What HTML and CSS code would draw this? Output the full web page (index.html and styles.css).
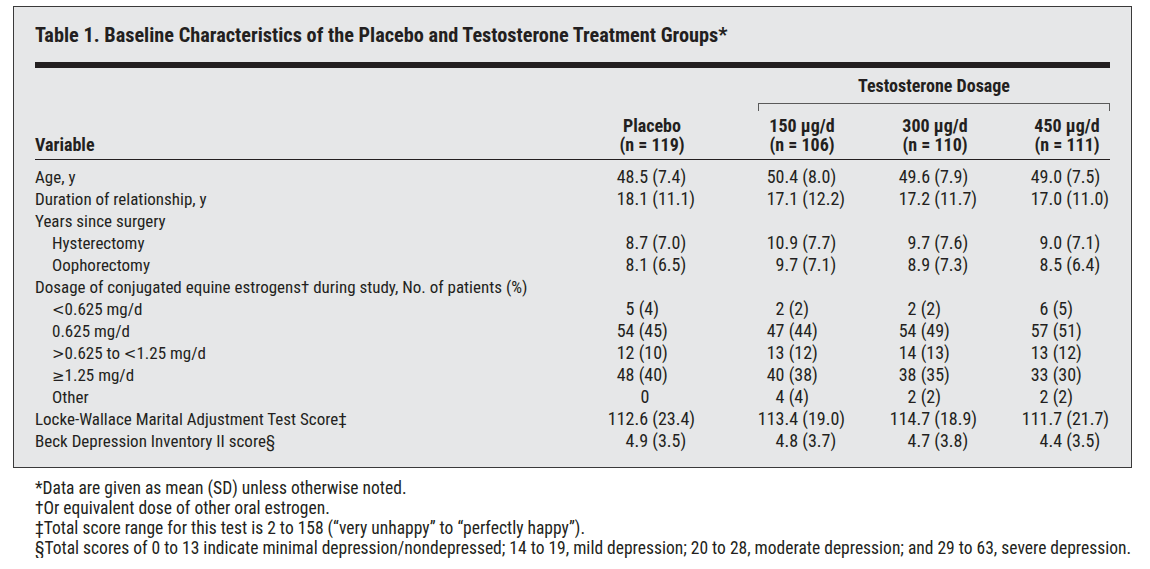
FILE: index.html
```html
<!DOCTYPE html>
<html>
<head>
<meta charset="utf-8">
<link rel="stylesheet" href="styles.css">
</head>
<body>
<div class="box">
  <h1 class="title">Table 1. Baseline Characteristics of the Placebo and Testosterone Treatment Groups*</h1>
  <div class="thick-rule"></div>
  <table class="data">
    <colgroup>
      <col class="w0"><col class="w1"><col class="w2"><col class="w3"><col class="w4">
    </colgroup>
    <thead>
      <tr class="hrow1">
        <th></th>
        <th></th>
        <th colspan="3" class="span-head">
          <div class="group-label">Testosterone Dosage</div>
          <div class="bracket"></div>
        </th>
      </tr>
      <tr class="hrow2">
        <th class="var-head">Variable</th>
        <th class="h1">Placebo<br>(n = 119)</th>
        <th class="h2">150 µg/d<br>(n = 106)</th>
        <th class="h3">300 µg/d<br>(n = 110)</th>
        <th class="h4">450 µg/d<br>(n = 111)</th>
      </tr>
    </thead>
    <tbody>
      <tr class="first">
        <td>Age, y</td>
        <td class="d1"><span class="i">48</span>.5 (7.4)</td>
        <td class="d2"><span class="i">50</span>.4 (8.0)</td>
        <td class="d3"><span class="i">49</span>.6 (7.9)</td>
        <td class="d4"><span class="i">49</span>.0 (7.5)</td>
      </tr>
      <tr>
        <td>Duration of relationship, y</td>
        <td class="d1"><span class="i">18</span>.1 (11.1)</td>
        <td class="d2"><span class="i">17</span>.1 (12.2)</td>
        <td class="d3"><span class="i">17</span>.2 (11.7)</td>
        <td class="d4"><span class="i">17</span>.0 (11.0)</td>
      </tr>
      <tr>
        <td>Years since surgery</td>
        <td></td><td></td><td></td><td></td>
      </tr>
      <tr>
        <td class="sub">Hysterectomy</td>
        <td class="d1"><span class="i">8</span>.7 (7.0)</td>
        <td class="d2"><span class="i">10</span>.9 (7.7)</td>
        <td class="d3"><span class="i">9</span>.7 (7.6)</td>
        <td class="d4"><span class="i">9</span>.0 (7.1)</td>
      </tr>
      <tr>
        <td class="sub">Oophorectomy</td>
        <td class="d1"><span class="i">8</span>.1 (6.5)</td>
        <td class="d2"><span class="i">9</span>.7 (7.1)</td>
        <td class="d3"><span class="i">8</span>.9 (7.3)</td>
        <td class="d4"><span class="i">8</span>.5 (6.4)</td>
      </tr>
      <tr>
        <td colspan="5">Dosage of conjugated equine estrogens† during study, No. of patients (%)</td>
      </tr>
      <tr>
        <td class="sub"><span class="op">&lt;</span>0.625 mg/d</td>
        <td class="d1"><span class="i">5</span> (4)</td>
        <td class="d2"><span class="i">2</span> (2)</td>
        <td class="d3"><span class="i">2</span> (2)</td>
        <td class="d4"><span class="i">6</span> (5)</td>
      </tr>
      <tr>
        <td class="sub">0.625 mg/d</td>
        <td class="d1"><span class="i">54</span> (45)</td>
        <td class="d2"><span class="i">47</span> (44)</td>
        <td class="d3"><span class="i">54</span> (49)</td>
        <td class="d4"><span class="i">57</span> (51)</td>
      </tr>
      <tr>
        <td class="sub"><span class="op">&gt;</span>0.625 to <span class="op">&lt;</span>1.25 mg/d</td>
        <td class="d1"><span class="i">12</span> (10)</td>
        <td class="d2"><span class="i">13</span> (12)</td>
        <td class="d3"><span class="i">14</span> (13)</td>
        <td class="d4"><span class="i">13</span> (12)</td>
      </tr>
      <tr>
        <td class="sub"><span class="op">≥</span>1.25 mg/d</td>
        <td class="d1"><span class="i">48</span> (40)</td>
        <td class="d2"><span class="i">40</span> (38)</td>
        <td class="d3"><span class="i">38</span> (35)</td>
        <td class="d4"><span class="i">33</span> (30)</td>
      </tr>
      <tr>
        <td class="sub">Other</td>
        <td class="d1"><span class="i zero">0</span></td>
        <td class="d2"><span class="i">4</span> (4)</td>
        <td class="d3"><span class="i">2</span> (2)</td>
        <td class="d4"><span class="i">2</span> (2)</td>
      </tr>
      <tr>
        <td>Locke-Wallace Marital Adjustment Test Score‡</td>
        <td class="d1"><span class="i">112</span>.6 (23.4)</td>
        <td class="d2"><span class="i">113</span>.4 (19.0)</td>
        <td class="d3"><span class="i">114</span>.7 (18.9)</td>
        <td class="d4"><span class="i">111</span>.7 (21.7)</td>
      </tr>
      <tr>
        <td>Beck Depression Inventory II score§</td>
        <td class="d1"><span class="i">4</span>.9 (3.5)</td>
        <td class="d2"><span class="i">4</span>.8 (3.7)</td>
        <td class="d3"><span class="i">4</span>.7 (3.8)</td>
        <td class="d4"><span class="i">4</span>.4 (3.5)</td>
      </tr>
    </tbody>
  </table>
</div>
<div class="notes">
  <p>*Data are given as mean (SD) unless otherwise noted.</p>
  <p>†Or equivalent dose of other oral estrogen.</p>
  <p>‡Total score range for this test is 2 to 158 (“very unhappy” to “perfectly happy”).</p>
  <p>§Total scores of 0 to 13 indicate minimal depression/nondepressed; 14 to 19, mild depression; 20 to 28, moderate depression; and 29 to 63, severe depression.</p>
</div>
</body>
</html>
```

FILE: styles.css
```css
html, body {
  margin: 0;
  padding: 0;
  background: #ffffff;
}
body {
  font-family: Roboto, "Liberation Sans", sans-serif;
  font-stretch: 85%;
  color: #231f20;
  font-size: 17px;
}
.box {
  margin: 6px 0 0 13px;
  border: 1px solid #3a3a3a;
  background: #e6e7e8;
  padding: 17px 20px 0 21px;
  box-sizing: border-box;
  height: 462px;
  width: 1119px;
}
.title {
  margin: 0;
  font-size: 20.3px;
  line-height: 22px;
  font-weight: bold;
}
.thick-rule {
  margin-top: 16px;
  height: 6px;
  background: #231f20;
  width: 1075px;
}
.data {
  width: 1075px;
  table-layout: fixed;
  border-collapse: collapse;
  border-spacing: 0;
}
.w0 { width: 555px; }
.w1 { width: 150px; }
.w2 { width: 133px; }
.w3 { width: 137px; }
.w4 { width: 100px; }
th, td {
  padding: 0;
  white-space: nowrap;
}
th {
  font-weight: bold;
  font-size: 18px;
}
.hrow1 th {
  padding-top: 7px;
  vertical-align: top;
}
.span-head {
  padding-left: 18px;
}
.group-label {
  line-height: 22px;
  text-align: center;
}
.bracket {
  margin-top: 6px;
  height: 7px;
  border: 1.5px solid #5a5a5a;
  border-bottom: none;
  border-top-width: 1px;
}
.hrow2 th {
  line-height: 19px;
  padding-top: 5px;
  padding-bottom: 5px;
  border-bottom: 1px solid #231f20;
  vertical-align: bottom;
  text-align: center;
}
.hrow2 .var-head {
  text-align: left;
}
.hrow2 .h1 { padding-right: 26px; }
.hrow2 .h2 { padding-right: 9px; }
.hrow2 .h3 { padding-right: 13px; }
.hrow2 .h4 { padding-left: 14px; }
tbody td {
  height: 22px;
  line-height: 22px;
  text-align: left;
  vertical-align: top;
}
tbody tr.first td {
  padding-top: 6px;
}
.sub {
  padding-left: 17px;
}
.op {
  font-family: "DejaVu Sans", sans-serif;
  font-stretch: 100%;
  font-size: 15px;
  line-height: 1;
}
.i {
  display: inline-block;
  width: 27px;
  text-align: right;
  vertical-align: top;
}
.zero {
  width: 42px;
}
.d1, .d2, .d3, .d4 {
  font-size: 18px;
}
.d1 { padding-left: 17.5px; }
.d2 { padding-left: 17.5px; }
.d3 { padding-left: 16.5px; }
.d4 { padding-left: 11.5px; }
.notes {
  margin-top: 10px;
  padding-left: 35px;
  font-size: 17.5px;
  line-height: 20px;
}
.notes p {
  margin: 0;
  white-space: nowrap;
}
```
